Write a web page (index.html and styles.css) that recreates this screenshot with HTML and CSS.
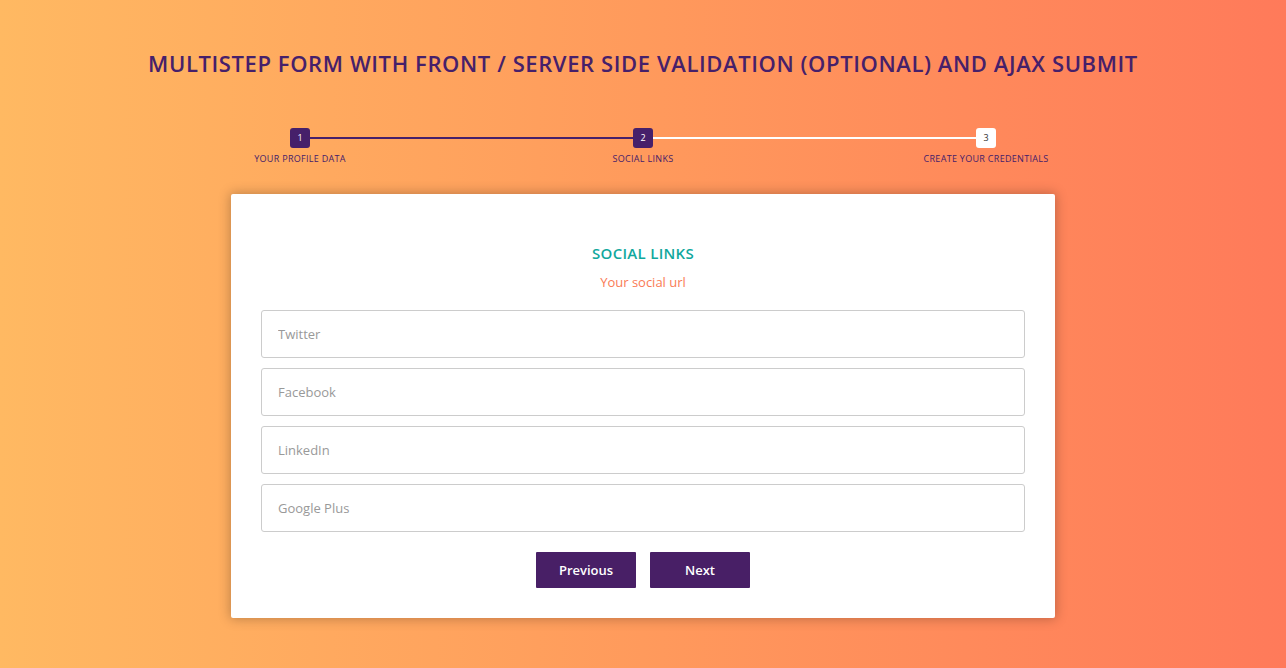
FILE: index.html
```html
<!DOCTYPE html>
<html>
<head>
<meta charset="utf-8">
<link rel="stylesheet" href="styles.css">
</head>
<body>
<div class="page">
  <h1 class="title">MULTISTEP FORM WITH FRONT / SERVER SIDE VALIDATION (OPTIONAL) AND AJAX SUBMIT</h1>
  <div class="progress">
    <div class="step step-first done">
      <div class="box">1</div>
      <div class="label">YOUR PROFILE DATA</div>
    </div>
    <div class="step step-mid done">
      <div class="box">2</div>
      <div class="label">SOCIAL LINKS</div>
    </div>
    <div class="step step-last">
      <div class="box">3</div>
      <div class="label">CREATE YOUR CREDENTIALS</div>
    </div>
  </div>
  <form class="card">
    <h2 class="card-title">SOCIAL LINKS</h2>
    <p class="card-sub">Your social url</p>
    <div class="fields">
      <input class="field" type="text" placeholder="Twitter">
      <input class="field" type="text" placeholder="Facebook">
      <input class="field" type="text" placeholder="LinkedIn">
      <input class="field" type="text" placeholder="Google Plus">
    </div>
    <div class="actions">
      <button type="button" class="btn">Previous</button>
      <button type="button" class="btn">Next</button>
    </div>
  </form>
</div>
</body>
</html>
```

FILE: styles.css
```css
* { box-sizing: border-box; }
html, body { margin: 0; height: 100%; }
body {
  background: linear-gradient(to right, #ffb962 0%, #ff9a5c 50%, #ff7a5a 100%);
  font-family: "Open Sans", "Liberation Sans", sans-serif;
  color: #46206a;
}
.page {
  display: flex;
  flex-direction: column;
  align-items: center;
  padding-top: 49px;
}
.title {
  margin: 0;
  font-size: 22px;
  font-weight: 600;
  color: #46206a;
  letter-spacing: 0.6px;
  line-height: 28px;
  white-space: nowrap;
}
.progress {
  display: grid;
  grid-template-columns: repeat(3, 343px);
  margin-top: 51px;
}
.step {
  position: relative;
  display: flex;
  flex-direction: column;
  align-items: center;
}
.step::before, .step::after {
  content: "";
  position: absolute;
  top: 9px;
  height: 2px;
  width: 50%;
}
.step::before { left: 0; }
.step::after { right: 0; }
.step-first::before { display: none; }
.step-first::after { background: #46206a; }
.step-mid::before { background: #46206a; }
.step-mid::after { background: #ffffff; }
.step-last::before { background: #ffffff; }
.step-last::after { display: none; }
.box {
  position: relative;
  z-index: 1;
  width: 20px;
  height: 20px;
  border-radius: 3px;
  background: #ffffff;
  color: #333;
  font-size: 9px;
  line-height: 20px;
  text-align: center;
}
.done .box { background: #46206a; color: #ffffff; }
.label {
  margin-top: 6px;
  font-size: 9px;
  letter-spacing: 0.3px;
  color: #46206a;
  line-height: 10px;
  white-space: nowrap;
}
.card {
  margin-top: 30px;
  width: 824px;
  height: 424px;
  background: #ffffff;
  border-radius: 2px;
  box-shadow: 0 0 12px 1px rgba(0,0,0,0.25);
  padding: 49px 30px 30px;
  display: flex;
  flex-direction: column;
  align-items: stretch;
}
.card-title {
  margin: 0;
  text-align: center;
  font-size: 15px;
  font-weight: 600;
  letter-spacing: 0.3px;
  color: #11a89d;
  line-height: 20px;
}
.card-sub {
  margin: 10px 0 0;
  text-align: center;
  font-size: 13px;
  color: #fa7b55;
  line-height: 18px;
}
.fields {
  margin-top: 19px;
  display: flex;
  flex-direction: column;
  gap: 10px;
}
.field {
  height: 48px;
  border: 1px solid #cccccc;
  border-radius: 3px;
  padding: 0 16px;
  font-family: inherit;
  font-size: 13px;
  color: #2c3e50;
  outline: none;
}
.field::placeholder { color: #999999; }
.actions {
  margin-top: 20px;
  display: flex;
  justify-content: center;
  gap: 14px;
}
.btn {
  width: 100px;
  height: 36px;
  border: 0;
  border-radius: 1px;
  background: #481f66;
  color: #ffffff;
  font-family: inherit;
  font-size: 13px;
  font-weight: 600;
}
```
